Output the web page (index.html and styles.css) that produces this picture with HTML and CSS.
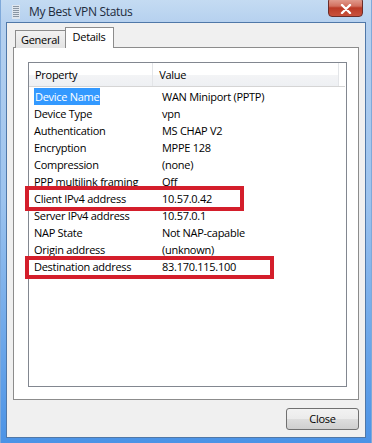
FILE: index.html
```html
<!DOCTYPE html>
<html>
<head>
<meta charset="utf-8">
<link rel="stylesheet" href="styles.css">
</head>
<body>
<div class="window">
  <div class="titlebar">
    <svg class="appicon" width="8" height="14" viewBox="0 0 8 14">
      <rect x="0" y="0" width="8" height="14" fill="#dfe6ee"/>
      <g stroke="#8a96a3" stroke-width="1">
        <line x1="1" y1="1.5" x2="7" y2="1.5"/>
        <line x1="1" y1="3.5" x2="7" y2="3.5"/>
        <line x1="1" y1="5.5" x2="7" y2="5.5"/>
        <line x1="1" y1="7.5" x2="7" y2="7.5"/>
        <line x1="1" y1="9.5" x2="7" y2="9.5"/>
        <line x1="1" y1="11.5" x2="7" y2="11.5"/>
      </g>
    </svg>
    <span class="title">My Best VPN Status</span>
    <div class="closebtn">
      <svg width="12" height="10" viewBox="0 0 12 10"><path d="M2 1 L10 9 M10 1 L2 9" stroke="#fff" stroke-width="2.4" stroke-linecap="round"/></svg>
    </div>
  </div>
  <div class="client">
    <div class="tabs">
      <div class="tab">General</div>
      <div class="tab active">Details</div>
    </div>
    <div class="panel">
      <div class="list">
        <div class="header">
          <div class="hcell c1">Property</div>
          <div class="hcell c2">Value</div>
          <div class="hcell c3"></div>
        </div>
        <div class="rows">
          <div class="row"><div class="c1"><span class="sel">Device Name</span></div><div class="c2">WAN Miniport (PPTP)</div></div>
          <div class="row"><div class="c1">Device Type</div><div class="c2">vpn</div></div>
          <div class="row"><div class="c1">Authentication</div><div class="c2">MS CHAP V2</div></div>
          <div class="row"><div class="c1">Encryption</div><div class="c2">MPPE 128</div></div>
          <div class="row"><div class="c1">Compression</div><div class="c2">(none)</div></div>
          <div class="row"><div class="c1">PPP multilink framing</div><div class="c2">Off</div></div>
          <div class="row"><div class="c1">Client IPv4 address</div><div class="c2">10.57.0.42</div></div>
          <div class="row"><div class="c1">Server IPv4 address</div><div class="c2">10.57.0.1</div></div>
          <div class="row"><div class="c1">NAP State</div><div class="c2">Not NAP-capable</div></div>
          <div class="row"><div class="c1">Origin address</div><div class="c2">(unknown)</div></div>
          <div class="row"><div class="c1">Destination address</div><div class="c2">83.170.115.100</div></div>
        </div>
        <div class="mark mark1"></div>
        <div class="mark mark2"></div>
      </div>
    </div>
    <div class="footer">
      <div class="button">Close</div>
    </div>
  </div>
</div>
</body>
</html>
```
FILE: styles.css
```css
html, body {
  margin: 0;
  padding: 0;
  background: #5a9be0;
}
body {
  font-family: "Open Sans", "Liberation Sans", sans-serif;
  font-size: 11px;
  letter-spacing: -0.28px;
  color: #000;
}
.window {
  width: 372px;
  height: 443px;
  box-sizing: border-box;
  display: flex;
  flex-direction: column;
  background: linear-gradient(to bottom, #c4dbf2 0px, #b6d1ef 22px, #9cc3ee 200px, #4b93e6 443px);
  padding: 0 5px 5px 5px;
  border-left: 1px solid #7fa9da;
  border-right: 1px solid #7fa9da;
}
.titlebar {
  height: 22px;
  flex: none;
  display: flex;
  align-items: center;
  position: relative;
}
.appicon {
  margin-left: 6px;
  margin-top: 2px;
}
.title {
  margin-left: 9px;
  font-size: 12px;
  letter-spacing: -0.3px;
  color: #1e2b3c;
  margin-top: 1px;
}
.closebtn {
  position: absolute;
  right: 3px;
  top: -3px;
  width: 35px;
  height: 20px;
  border: 1px solid #6b2d2a;
  border-radius: 4px;
  box-sizing: border-box;
  background: linear-gradient(to bottom, #e6a79a 0%, #d2705f 45%, #bb3a26 55%, #c9523d 100%);
  display: flex;
  align-items: center;
  justify-content: center;
  padding-top: 3px;
}
.client {
  flex: 1;
  background: #f0f0f0;
  border: 1px solid #5078a8;
  display: flex;
  flex-direction: column;
  padding: 0 6px 0 6px;
}
.tabs {
  display: flex;
  align-items: flex-end;
  height: 25px;
  padding-left: 2px;
  position: relative;
  z-index: 2;
  margin-bottom: -1px;
}
.tab {
  height: 17px;
  border: 1px solid #8c8c8c;
  border-bottom: none;
  background: linear-gradient(to bottom, #f2f2f2, #e3e3e3);
  padding: 0 5px;
  line-height: 18px;
  box-sizing: content-box;
}
.tab.active {
  height: 20px;
  background: #fff;
  padding: 0 7px;
  line-height: 17px;
  margin-left: -1px;
}
.panel {
  height: 353px;
  border: 1px solid #8c8c8c;
  background: #fff;
  padding: 14px 11px 12px 14px;
  box-sizing: border-box;
}
.list {
  position: relative;
  height: 100%;
  border: 1px solid #828790;
  box-sizing: border-box;
  padding-right: 1px;
}
.header {
  display: flex;
  height: 23px;
  background: linear-gradient(to bottom, #ffffff 0%, #ffffff 50%, #f3f4f6 51%, #eef0f3 100%);
  border-bottom: 1px solid #d5d5d5;
}
.hcell {
  line-height: 23px;
  padding-left: 6px;
  box-sizing: border-box;
}
.hcell.c1 {
  width: 127px;
  border-right: 1px solid #e3e5e8;
}
.hcell.c2 {
  width: 190px;
  border-right: 1px solid #e3e5e8;
}
.hcell.c3 {
  flex: 1;
  background: #fff;
}
.rows {
  padding-top: 1px;
}
.row {
  display: flex;
  height: 17px;
  line-height: 17px;
}
.row .c1 {
  width: 127px;
  padding-left: 5px;
  box-sizing: border-box;
}
.row .c2 {
  padding-left: 6px;
}
.sel {
  background: #3399ff;
  color: #fff;
  padding: 0 1px;
  display: inline-block;
  height: 17px;
}
.mark {
  position: absolute;
  border: 4px solid #d41e2b;
  box-sizing: border-box;
}
.mark1 {
  left: -4px;
  top: 123px;
  width: 219px;
  height: 25px;
}
.mark2 {
  left: -4px;
  top: 193px;
  width: 249px;
  height: 23px;
}
.footer {
  flex: 1;
  display: flex;
  justify-content: flex-end;
  align-items: flex-start;
  padding-top: 8px;
}
.button {
  width: 73px;
  height: 22px;
  box-sizing: border-box;
  border: 1px solid #707070;
  border-radius: 3px;
  background: linear-gradient(to bottom, #f2f2f2 0%, #ebebeb 50%, #dddddd 51%, #cfcfcf 100%);
  text-align: center;
  line-height: 20px;
}
```
